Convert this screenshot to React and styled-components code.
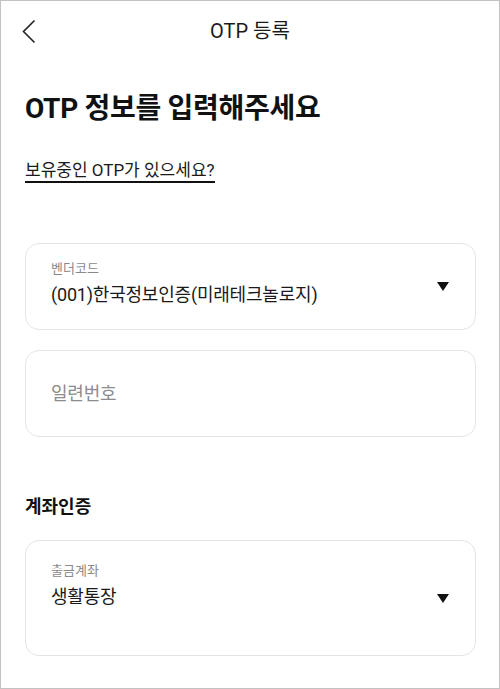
import React from "react";
import styled, { createGlobalStyle } from "styled-components";

const GlobalStyle = createGlobalStyle`
  html, body {
    margin: 0;
    padding: 0;
    background: #fff;
  }
  body {
    font-family: Roboto, "Noto Sans CJK KR", sans-serif;
    color: #111;
  }
`;

const Frame = styled.div`
  width: 500px;
  height: 689px;
  box-sizing: border-box;
  border: 1px solid #c2c2c2;
  background: #fff;
  overflow: hidden;
`;

const Header = styled.header`
  height: 60px;
  display: grid;
  grid-template-columns: 60px 1fr 60px;
  align-items: center;
`;

const BackButton = styled.button`
  border: 0;
  background: none;
  padding: 0 0 0 21px;
  height: 60px;
  display: flex;
  align-items: center;
  cursor: pointer;
`;

const Title = styled.h1`
  margin: 0;
  text-align: center;
  font-size: 20px;
  line-height: 26px;
  font-weight: 400;
  color: #1a1a1a;
`;

const Content = styled.main`
  padding: 0 23px 0 24px;
`;

const Heading = styled.h2`
  margin: 30px 0 0;
  font-size: 28px;
  line-height: 36px;
  font-weight: 700;
  letter-spacing: -0.3px;
  color: #111;
`;

const LinkRow = styled.div`
  display: flex;
  margin-top: 33px;
`;

const HelpLink = styled.a`
  font-size: 17px;
  line-height: 20px;
  color: #1a1a1a;
  text-decoration: none;
  padding-bottom: 1px;
  border-bottom: 2px solid #111;
`;

const Field = styled.div`
  box-sizing: border-box;
  height: ${(p) => p.$height}px;
  margin-top: ${(p) => p.$gap}px;
  border: 1px solid #e4e4e4;
  border-radius: 14px;
  display: flex;
  align-items: center;
  padding: 0 26px 0 25px;
`;

const FieldText = styled.div`
  flex: 1;
  align-self: ${(p) => (p.$top ? "flex-start" : "center")};
  padding-top: ${(p) => p.$top || 0}px;
  display: flex;
  flex-direction: column;
  gap: 4px;
`;

const FieldLabel = styled.span`
  font-size: 13px;
  line-height: 18px;
  color: #8a8a8a;
`;

const FieldValue = styled.span`
  font-size: 18px;
  line-height: 26px;
  letter-spacing: -0.2px;
  color: ${(p) => (p.$placeholder ? "#8c8c8c" : "#1a1a1a")};
`;

const Caret = styled.span`
  width: 0;
  height: 0;
  border-left: 6.5px solid transparent;
  border-right: 6.5px solid transparent;
  border-top: 9px solid #111;
`;

const SectionTitle = styled.h3`
  margin: 58px 0 0;
  font-size: 18px;
  line-height: 24px;
  font-weight: 700;
  color: #111;
`;

function ChevronLeft() {
  return (
    <svg width="14" height="25" viewBox="0 0 14 25" fill="none">
      <path d="M12.5 1.5L1.5 12.5L12.5 23.5" stroke="#222" strokeWidth="1.6" />
    </svg>
  );
}

export default function App() {
  return (
    <>
      <GlobalStyle />
      <Frame>
        <Header>
          <BackButton aria-label="뒤로">
            <ChevronLeft />
          </BackButton>
          <Title>OTP 등록</Title>
          <span />
        </Header>
        <Content>
          <Heading>OTP 정보를 입력해주세요</Heading>
          <LinkRow>
            <HelpLink href="#">보유중인 OTP가 있으세요?</HelpLink>
          </LinkRow>

          <Field $height={87} $gap={60}>
            <FieldText $top={16}>
              <FieldLabel>벤더코드</FieldLabel>
              <FieldValue>(001)한국정보인증(미래테크놀로지)</FieldValue>
            </FieldText>
            <Caret />
          </Field>

          <Field $height={87} $gap={20}>
            <FieldText>
              <FieldValue $placeholder>일련번호</FieldValue>
            </FieldText>
          </Field>

          <SectionTitle>계좌인증</SectionTitle>

          <Field $height={116} $gap={21}>
            <FieldText $top={21}>
              <FieldLabel>출금계좌</FieldLabel>
              <FieldValue>생활통장</FieldValue>
            </FieldText>
            <Caret />
          </Field>
        </Content>
      </Frame>
    </>
  );
}
